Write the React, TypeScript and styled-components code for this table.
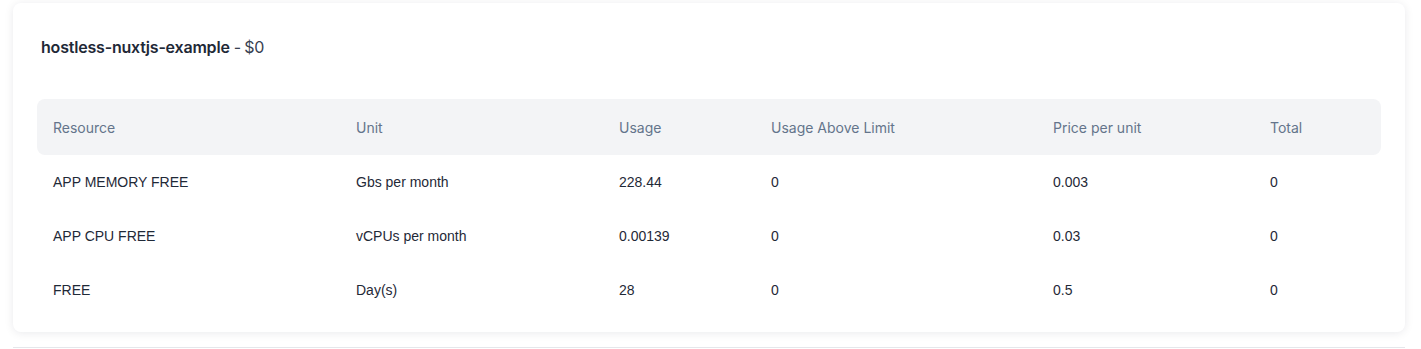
import React, { FC } from "react";
import styled, { createGlobalStyle } from "styled-components";

const GlobalStyle = createGlobalStyle`
  body {
    margin: 0;
    background: #ffffff;
    font-family: "Inter", "Noto Sans", sans-serif;
  }
`;

interface UsageRow {
  resource: string;
  unit: string;
  usage: string;
  aboveLimit: string;
  price: string;
  total: string;
}

const ROWS: UsageRow[] = [
  { resource: "APP MEMORY FREE", unit: "Gbs per month", usage: "228.44", aboveLimit: "0", price: "0.003", total: "0" },
  { resource: "APP CPU FREE", unit: "vCPUs per month", usage: "0.00139", aboveLimit: "0", price: "0.03", total: "0" },
  { resource: "FREE", unit: "Day(s)", usage: "28", aboveLimit: "0", price: "0.5", total: "0" },
];

const COLUMNS = ["Resource", "Unit", "Usage", "Usage Above Limit", "Price per unit", "Total"];

export default function App() {
  return (
    <>
      <GlobalStyle />
      <Page>
        <AppCard name="hostless-nuxtjs-example" cost="$0" rows={ROWS} />
        <Divider />
      </Page>
    </>
  );
}

interface Props {
  name: string;
  cost: string;
  rows: UsageRow[];
}

const AppCard: FC<Props> = ({ name, cost, rows }) => {
  return (
    <Card>
      <Title>
        <strong>{name}</strong>
        <Cost>- {cost}</Cost>
      </Title>
      <Table>
        <HeaderRow>
          {COLUMNS.map((c) => (
            <HeadCell key={c}>{c}</HeadCell>
          ))}
        </HeaderRow>
        {rows.map((r) => (
          <BodyRow key={r.resource}>
            <Cell>{r.resource}</Cell>
            <Cell>{r.unit}</Cell>
            <Cell>{r.usage}</Cell>
            <Cell>{r.aboveLimit}</Cell>
            <Cell>{r.price}</Cell>
            <Cell>{r.total}</Cell>
          </BodyRow>
        ))}
      </Table>
    </Card>
  );
};

const Page = styled.div`
  padding: 3px 16px 0 13px;
`;

const Card = styled.div`
  background: #ffffff;
  border-radius: 8px;
  box-shadow: 0 1px 10px rgba(15, 23, 42, 0.09);
  padding: 34px 24px 15px 24px;
`;

const Title = styled.div`
  padding-left: 4px;
  display: flex;
  align-items: baseline;
  gap: 4px;
  font-size: 16px;
  line-height: 20px;
  color: #1f2937;
  letter-spacing: -0.2px;

  strong {
    font-weight: 600;
  }
`;

const Cost = styled.span`
  font-weight: 400;
  color: #374151;
  word-spacing: -1px;
`;

const Table = styled.div`
  margin-top: 42px;
  display: grid;
  grid-template-columns: 303px 263px 152px 282px 217px 1fr;
`;

const HeaderRow = styled.div`
  display: contents;

  & > div:first-child {
    border-radius: 8px 0 0 8px;
  }
  & > div:last-child {
    border-radius: 0 8px 8px 0;
  }
`;

const HeadCell = styled.div`
  background: #f3f4f6;
  height: 56px;
  display: flex;
  align-items: center;
  padding-left: 16px;
  font-size: 14px;
  color: #64748b;
`;

const BodyRow = styled.div`
  display: contents;
`;

const Cell = styled.div`
  height: 54px;
  display: flex;
  align-items: center;
  padding-left: 16px;
  font-family: "Liberation Sans", Arial, sans-serif;
  font-size: 14px;
  color: #1f2937;
`;

const Divider = styled.div`
  margin-top: 15px;
  border-top: 1px solid #e5e7eb;
`;
